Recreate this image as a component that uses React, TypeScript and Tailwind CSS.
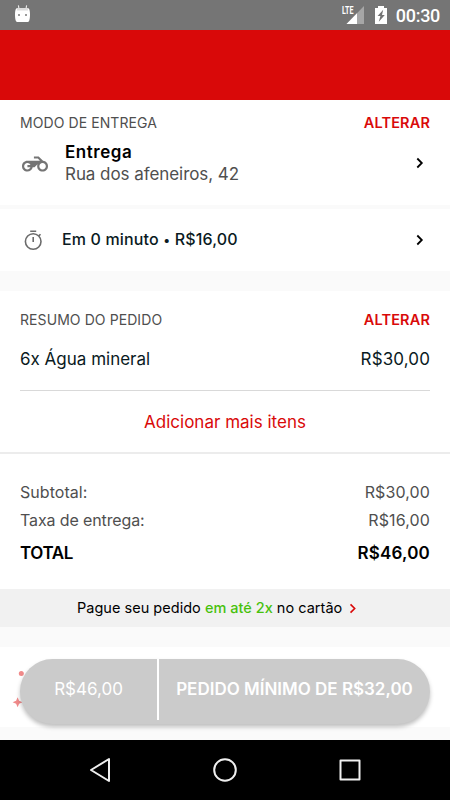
import { clsx } from 'clsx'
import type { ReactNode } from 'react'

const totals = [
  { label: 'Subtotal:', value: 'R$30,00', labelClass: 'tracking-[0.05px]' },
  { label: 'Taxa de entrega:', value: 'R$16,00', labelClass: 'tracking-[-0.12px]' },
]

function Chevron({ className }: { className?: string }) {
  return (
    <svg viewBox="0 0 8 12" className={clsx('h-3 w-2 shrink-0', className)} fill="none" stroke="currentColor" strokeWidth="1.8">
      <path d="M1.3 1.5 5.8 6l-4.5 4.5" />
    </svg>
  )
}

function StatusBar() {
  return (
    <header className="flex h-[30px] items-center bg-[#757575] pr-2.5 pl-[14px] text-white">
      <svg viewBox="0 0 17 20" className="h-5 w-[17px]">
        <path d="M4.4 0.3 5 4M12.600 0.300 12 4" stroke="#ececec" strokeWidth="1.100" />
        <path d="M2.500 3.200h12C15.700 4.500 16 6.500 16 9.500c0 3-.3 5.200-.9 6.400-.4.800-1 1.100-2 1.100H3.900c-1 0-1.600-.3-2-1.100C1.300 14.700 1 12.500 1 9.500c0-3 .3-5 1.500-6.300z" fill="#fff" />
        <path d="M3.500 3h10l.6 2.500H2.900z" fill="#dcdcdc" />
        <path d="M4 9h2v2H4zM11 9h2v2h-2z" fill="#9a9a9a" />
      </svg>
      <svg viewBox="0 0 24 20" className="ml-auto h-5 w-6">
        <path d="M23 1v18H5.500z" fill="#a6a6a6" />
        <path d="M16 8.200V19H5.500z" fill="#fff" />
        <path d="M0 0h13.500v9.500H0z" fill="#757575" />
        <text x="1" y="9" className="font-['Roboto'] text-[11px] font-bold" fill="#fff" textLength="11.500" lengthAdjust="spacingAndGlyphs">
          LTE
        </text>
      </svg>
      <svg viewBox="0 0 12 18" className="ml-[10px] h-[18px] w-3">
        <path d="M0 2h3V0h6v2h3v16H0z" fill="#fff" />
        <path d="M8.200 3.800 2.600 10h2.800L3.800 15.800 9.800 9H7z" fill="#757575" />
      </svg>
      <span className="mt-0.5 ml-[9px] font-['Roboto'] text-[18px] leading-7 font-medium tracking-[-0.3px]">00:30</span>
    </header>
  )
}

function SectionHeader({ title }: { title: string }) {
  return (
    <div className="flex h-5 items-center justify-between">
      <h2 className="text-[14px] leading-5 tracking-[0.08px] text-[#4f4f4f]">{title}</h2>
      <button className="text-[14.5px] leading-5 font-semibold tracking-[0.15px] text-[#d90909]">ALTERAR</button>
    </div>
  )
}

function Delivery() {
  return (
    <section className="h-[105px] bg-white px-5 pt-[13px]">
      <SectionHeader title="MODO DE ENTREGA" />
      <div className="mt-[9px] flex h-[42px] items-center">
        <svg viewBox="0 0 24 24" className="mt-px mr-[17px] ml-[2px] size-[26px]" fill="#757575">
          <path d="M19.440 9.030 15.410 5H11v2h3.590l2 2H5c-2.800 0-5 2.200-5 5s2.200 5 5 5c2.460 0 4.450-1.690 4.900-4h1.650l2.770-2.770c-.21.54-.32 1.140-.32 1.770 0 2.800 2.200 5 5 5s5-2.200 5-5c0-2.650-1.970-4.770-4.560-4.970zM7.820 15C7.400 16.150 6.280 17 5 17c-1.630 0-3-1.370-3-3s1.370-3 3-3c1.280 0 2.400.85 2.820 2H5v2h2.820zM19 17c-1.660 0-3-1.340-3-3s1.340-3 3-3 3 1.340 3 3-1.340 3-3 3z" />
        </svg>
        <div>
          <p className="text-[17px] leading-[21px] font-semibold tracking-[0.55px] text-black">Entrega</p>
          <p className="pt-px text-[17px] leading-5 tracking-[-0.06px] text-[#4f4f4f]">Rua dos afeneiros, 42</p>
        </div>
        <Chevron className="mr-1.5 ml-auto" />
      </div>
    </section>
  )
}

function Schedule() {
  return (
    <section className="mt-1 flex h-[62px] items-center bg-white px-5">
      <svg viewBox="0 0 20 22" className="mr-[18px] ml-[3px] h-[22px] w-5" fill="none" stroke="#6b6b6b" strokeWidth="1.600">
        <circle cx="10.200" cy="12.500" r="7.800" />
        <path d="M7.200 2.300h6M10.200 8v5M15.800 6.900l1.700-1.700" />
      </svg>
      <p className="pb-0.5 pl-px text-[16px] leading-5 font-medium tracking-[0.15px] text-[#0a1a22]">
        Em 0 minuto <span className="text-[13px]">•</span> R$16,00
      </p>
      <Chevron className="mr-1.5 ml-auto" />
    </section>
  )
}

function OrderSummary() {
  return (
    <section className="mt-5 h-[298px] bg-white">
      <div className="px-5 pt-[19px]">
        <SectionHeader title="RESUMO DO PEDIDO" />
        <div className="flex h-[61px] items-center justify-between border-b border-[#d9d9d9] text-[17px] text-[#0a1a22]">
          <span>6x Água mineral</span>
          <span className="tracking-[0.12px]">R$30,00</span>
        </div>
      </div>
      <button className="flex h-[63px] w-full items-center justify-center border-b-2 border-[#ececec] pt-0.5 text-[17px] text-[#d90909]">
        Adicionar mais itens
      </button>
      <div className="px-5 pt-6">
        {totals.map((row) => (
          <div key={row.label} className="flex h-7 items-center justify-between text-[16px] text-[#4f4f4f]">
            <span className={row.labelClass}>{row.label}</span>
            <span className="tracking-[0.12px]">{row.value}</span>
          </div>
        ))}
        <div className="mt-[5px] flex h-[29px] items-center justify-between text-[17px] font-semibold text-black">
          <span className="tracking-[-0.4px]">TOTAL</span>
          <span className="tracking-[0.2px]">R$46,00</span>
        </div>
      </div>
    </section>
  )
}

function Installments() {
  return (
    <section className="flex h-[38px] items-center bg-[#f1f1f1] pl-[77px] text-[14.500px] text-black">
      <p className="tracking-[0.02px] whitespace-pre">
        Pague seu pedido <span className="font-medium text-[#47c10c]">em até 2x</span> no cartão
      </p>
      <Chevron className="ml-[7px] h-[11px] text-[#d90909]" />
    </section>
  )
}

function PillLabel({ children, className }: { children: ReactNode; className: string }) {
  return <span className={clsx('flex h-[61px] items-center justify-center text-[17px] text-white', className)}>{children}</span>
}

function Checkout() {
  return (
    <section className="relative mt-5 h-20 bg-white px-5 pt-3">
      <svg viewBox="0 0 14 44" className="absolute top-[21px] left-[11px] h-11 w-[14px]" fill="#f08a8a">
        <circle cx="10.300" cy="5.400" r="2.500" />
        <path d="M6.600 29.200l1.500 3.500 3.500 1.500L8.100 35.700l-1.500 3.500-1.500-3.500-3.500-1.500 3.500-1.500z" />
      </svg>
      <button className="relative flex h-[65px] w-full rounded-full bg-[#cbcbcb] shadow-[0_3px_4px_rgba(0,0,0,0.25)]">
        <PillLabel className="w-[137px]">R$46,00</PillLabel>
        <span className="h-[61px] w-[2px] bg-white" />
        <PillLabel className="flex-1 font-semibold">PEDIDO MÍNIMO DE R$32,00</PillLabel>
      </button>
    </section>
  )
}

function NavigationBar() {
  return (
    <nav className="mt-[13px] flex h-[60px] items-center justify-around bg-black px-[37px]">
      <svg viewBox="0 0 26 26" className="size-[26px]" fill="none" stroke="#efefef" strokeWidth="2" strokeLinejoin="round">
        <path d="M22 2v22L4 13z" />
      </svg>
      <svg viewBox="0 0 26 26" className="size-[26px]" fill="none" stroke="#efefef" strokeWidth="2">
        <circle cx="13" cy="13" r="10.800" />
      </svg>
      <svg viewBox="0 0 26 26" className="size-[26px]" fill="none" stroke="#efefef" strokeWidth="2" strokeLinejoin="round">
        <path d="M3.500 3.500h19v19h-19z" />
      </svg>
    </nav>
  )
}

export default function App() {
  return (
    <div className="h-[800px] w-[450px] overflow-hidden bg-[#fafafa] font-['Inter','Roboto',sans-serif]">
      <StatusBar />
      <div className="h-[70px] bg-[#d90909]" />
      <Delivery />
      <Schedule />
      <OrderSummary />
      <Installments />
      <Checkout />
      <NavigationBar />
    </div>
  )
}
